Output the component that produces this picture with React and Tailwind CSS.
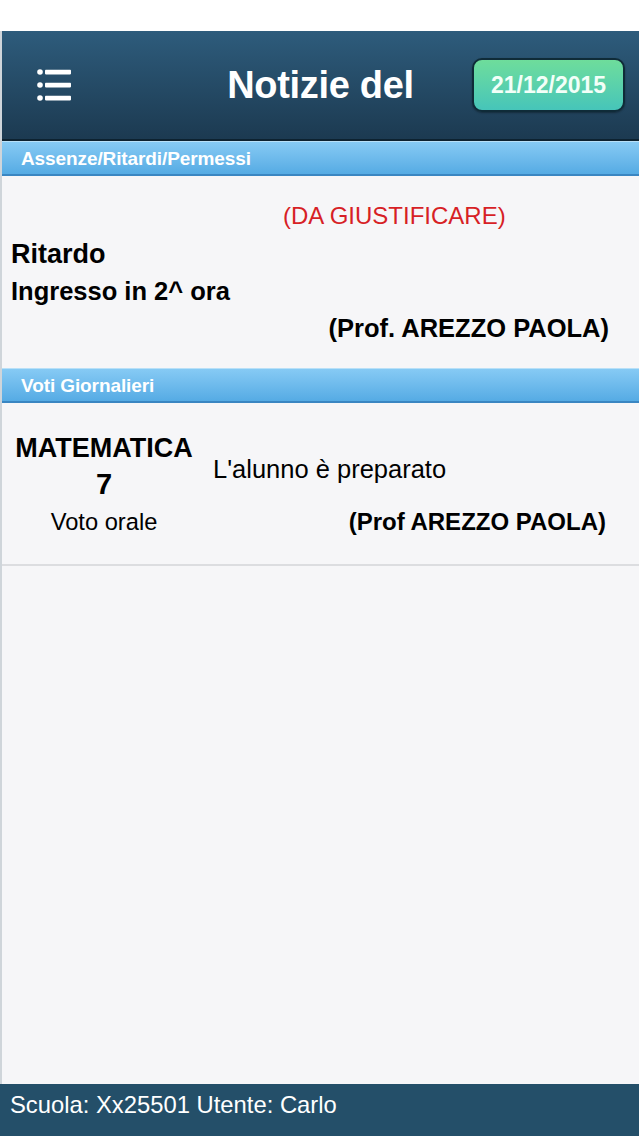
import React from "react";

function MenuIcon() {
  return (
    <svg width="36" height="34" viewBox="0 0 36 34" fill="#ffffff">
      <circle cx="4" cy="4" r="2.8" />
      <circle cx="4" cy="17" r="2.8" />
      <circle cx="4" cy="30" r="2.8" />
      <rect x="9" y="1.8" width="26" height="4.6" rx="0.8" />
      <rect x="9" y="14.8" width="26" height="4.6" rx="0.8" />
      <rect x="9" y="27.8" width="26" height="4.6" rx="0.8" />
    </svg>
  );
}

function SectionBar({ title }) {
  return (
    <div className="h-[35px] flex items-center pl-[19px] bg-gradient-to-b from-[#86caf4] to-[#55abe4] border-b-2 border-[#3a86c2] border-t border-t-[#b8e0f8]">
      <span className="text-white font-bold text-[19px] leading-none tracking-[-0.1px]">{title}</span>
    </div>
  );
}

export default function App() {
  return (
    <div
      className="w-[639px] h-[1136px] flex flex-col bg-white overflow-hidden"
      style={{ fontFamily: '"Liberation Sans", Arial, sans-serif' }}
    >
      <div className="h-[31px] bg-white shrink-0" />
      <div className="flex-1 flex flex-col border-l-2 border-[#cfd5da] bg-[#f6f6f8] min-h-0">
        {/* Header */}
        <div className="h-[110px] shrink-0 grid grid-cols-[1fr_auto_1fr] items-center bg-gradient-to-b from-[#2e5c7c] to-[#1c3a51] border-b-2 border-[#0d2230]">
          <div className="pl-[34px] flex items-center">
            <MenuIcon />
          </div>
          <div className="text-white font-bold text-[38px] leading-none tracking-[-0.3px]">Notizie del</div>
          <div className="flex justify-end pr-[14px]">
            <div className="w-[153px] h-[54px] rounded-[10px] border-2 border-[#0f2b38] bg-gradient-to-b from-[#6edd9b] to-[#46c5b9] flex items-center justify-center shadow-[0_1px_2px_rgba(0,0,0,0.35)]">
              <span className="text-[#f2fff8] font-bold text-[23px] leading-none">21/12/2015</span>
            </div>
          </div>
        </div>

        <SectionBar title="Assenze/Ritardi/Permessi" />

        {/* Assenze content */}
        <div className="flex flex-col pt-[26px] pb-[22px]">
          <div className="pl-[281px] text-[#d71f26] text-[24px] leading-[28px]">(DA GIUSTIFICARE)</div>
          <div className="mt-[6px] pl-[9px] text-black font-bold text-[27px] leading-[36px]">Ritardo</div>
          <div className="pl-[9px] text-black font-bold text-[25.5px] leading-[36px] mt-[1px]">Ingresso in 2^ ora</div>
          <div className="text-right pr-[30px] text-black font-bold text-[25.5px] leading-[36px] mt-[1px]">(Prof. AREZZO PAOLA)</div>
        </div>

        <SectionBar title="Voti Giornalieri" />

        {/* Voti content */}
        <div className="flex pt-[28px] pb-[25px] border-b-2 border-[#dcdde0]">
          <div className="w-[204px] flex flex-col items-center shrink-0">
            <div className="text-black font-bold text-[27px] leading-[34px]">MATEMATICA</div>
            <div className="text-black font-bold text-[29px] leading-[34px] mt-[2px]">7</div>
            <div className="text-black text-[23.7px] leading-[34px] mt-[4px]">Voto orale</div>
          </div>
          <div className="flex-1 flex flex-col pl-[7px] pr-[33px] pt-[21px]">
            <div className="text-black text-[25.5px] leading-[34px]">L'alunno è preparato</div>
            <div className="text-right text-black font-bold text-[24px] leading-[34px] mt-[19px]">(Prof AREZZO PAOLA)</div>
          </div>
        </div>

        <div className="flex-1" />
      </div>

      {/* Footer */}
      <div className="h-[52px] shrink-0 bg-[#244f69] flex items-start pt-[7px] pl-[10px]">
        <span className="text-white text-[23.8px] leading-[28px]">Scuola: Xx25501 Utente: Carlo</span>
      </div>
    </div>
  );
}
